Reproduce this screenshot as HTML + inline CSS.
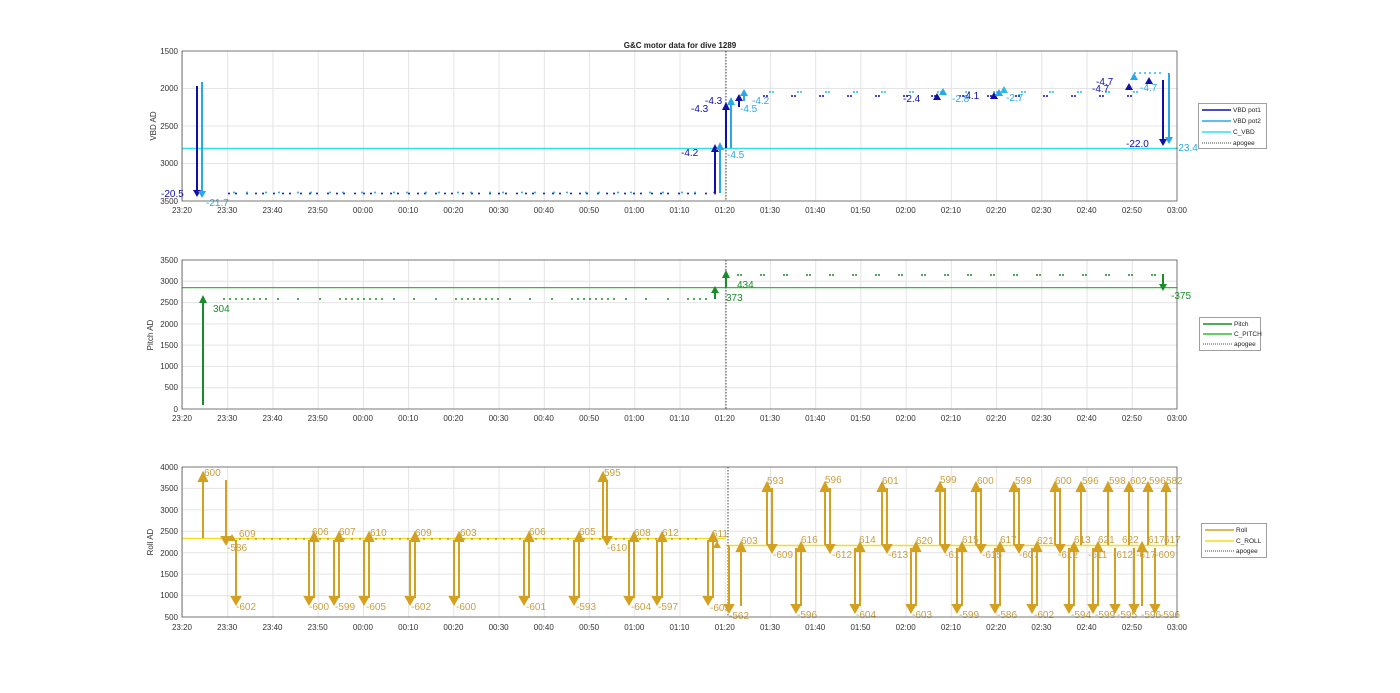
<!DOCTYPE html>
<html><head><meta charset="utf-8"><style>
html,body{margin:0;padding:0;background:#fff;}
svg{display:block;font-family:"Liberation Sans",sans-serif;}
.t{font-size:8px;fill:#333;}
.yl{font-size:8px;fill:#333;text-anchor:end;}
.xl{font-size:8px;fill:#333;text-anchor:middle;}
</style></head><body>
<svg width="1400" height="693" viewBox="0 0 1400 693" xmlns="http://www.w3.org/2000/svg">
<defs>
<pattern id="vg" patternUnits="userSpaceOnUse" x="182" y="0" width="45.227" height="10"><line x1="0.5" y1="0" x2="0.5" y2="10" stroke="#e4e4e4" stroke-width="1"/></pattern>
<marker id="ab" markerWidth="6" markerHeight="6" refX="3" refY="3" orient="auto"><path d="M0,0 L6,3 L0,6 Z" fill="#1010a8"/></marker>
</defs>
<rect width="1400" height="693" fill="#fff"/>
<text x="680" y="48" font-size="8" font-weight="bold" text-anchor="middle" fill="#222">G&amp;C motor data for dive 1289</text>

<!-- ===== AXIS 1 ===== -->
<rect x="182" y="51" width="995" height="150" fill="url(#vg)"/>
<g stroke="#e4e4e4"><line x1="182" y1="88.5" x2="1177" y2="88.5"/><line x1="182" y1="126" x2="1177" y2="126"/><line x1="182" y1="163.5" x2="1177" y2="163.5"/></g>
<line x1="182" y1="148.5" x2="1177" y2="148.5" stroke="#30e0e8" stroke-width="1.5"/>
<line x1="726" y1="51" x2="726" y2="201" stroke="#444" stroke-dasharray="1.5 1.5"/>
<!-- dots before -->
<line x1="229" y1="193.5" x2="720" y2="193.5" stroke="#1010a8" stroke-width="2" stroke-linecap="round" stroke-dasharray="0 7 0 11 0 9"/>
<line x1="234" y1="192.5" x2="720" y2="192.5" stroke="#28a8e8" stroke-width="2" stroke-linecap="round" stroke-dasharray="0 13 0 19"/>
<!-- dots after -->
<line x1="764" y1="96" x2="1150" y2="96" stroke="#1010a8" stroke-width="2" stroke-linecap="round" stroke-dasharray="0 3 0 25"/>
<line x1="770" y1="92" x2="1150" y2="92" stroke="#30b8e8" stroke-width="2" stroke-linecap="round" stroke-dasharray="0 3 0 25"/>
<line x1="1135" y1="73" x2="1165" y2="73" stroke="#30b8e8" stroke-width="2" stroke-linecap="round" stroke-dasharray="0 5"/>
<!-- arrows -->
<g stroke-width="2">
<line x1="197" y1="86" x2="197" y2="192" stroke="#1010a8"/><path d="M193,190 L201,190 L197,197 Z" fill="#1010a8"/>
<line x1="202" y1="82" x2="202" y2="192" stroke="#28a8e8"/><path d="M198,191 L206,191 L202,198 Z" fill="#28a8e8"/>
<line x1="715" y1="193" x2="715" y2="150" stroke="#1010a8"/><path d="M711,152 L719,152 L715,144 Z" fill="#1010a8"/>
<line x1="720" y1="193" x2="720" y2="148" stroke="#28a8e8"/><path d="M716,150 L724,150 L720,142 Z" fill="#28a8e8"/>
<line x1="726" y1="148" x2="726" y2="108" stroke="#1010a8"/><path d="M722,110 L730,110 L726,102 Z" fill="#1010a8"/>
<line x1="731" y1="148" x2="731" y2="103" stroke="#28a8e8"/><path d="M727,105 L735,105 L731,97 Z" fill="#28a8e8"/>
<line x1="739" y1="107" x2="739" y2="99" stroke="#1010a8"/><path d="M735,101 L743,101 L739,94 Z" fill="#1010a8"/>
<line x1="744" y1="101" x2="744" y2="95" stroke="#28a8e8"/><path d="M740,96 L748,96 L744,89 Z" fill="#28a8e8"/>
<path d="M933,100 L941,100 L937,93 Z" fill="#1010a8"/><path d="M939,95 L947,95 L943,88 Z" fill="#28a8e8"/>
<path d="M990,99 L998,99 L994,92 Z" fill="#1010a8"/><path d="M995,96 L1003,96 L999,89 Z" fill="#28a8e8"/><path d="M1000,93 L1008,93 L1004,86 Z" fill="#30b8e8"/>
<path d="M1125,90 L1133,90 L1129,83 Z" fill="#1010a8"/><path d="M1130,80 L1138,80 L1134,73 Z" fill="#28a8e8"/>
<path d="M1145,84 L1153,84 L1149,77 Z" fill="#1010a8"/>
<line x1="1163" y1="80" x2="1163" y2="140" stroke="#1010a8"/><path d="M1159,139 L1167,139 L1163,146 Z" fill="#1010a8"/>
<line x1="1169" y1="73" x2="1169" y2="138" stroke="#28a8e8"/><path d="M1165,137 L1173,137 L1169,144 Z" fill="#28a8e8"/>
</g>
<g font-size="10">
<text x="161" y="197" fill="#1010a8">-20.5</text><text x="206" y="206" fill="#28a8e8">-21.7</text>
<text x="681" y="156" fill="#1010a8">-4.2</text><text x="727" y="158" fill="#28a8e8">-4.5</text>
<text x="691" y="112" fill="#1010a8">-4.3</text><text x="705" y="104" fill="#1010a8">-4.3</text>
<text x="740" y="112" fill="#28a8e8">-4.5</text><text x="752" y="104" fill="#28a8e8">-4.2</text>
<text x="903" y="102" fill="#1010a8">-2.4</text><text x="952" y="102" fill="#28a8e8">-2.8</text><text x="962" y="99" fill="#1010a8">-4.1</text>
<text x="1006" y="101" fill="#28a8e8">-2.7</text><text x="1096" y="85" fill="#1010a8">-4.7</text><text x="1092" y="92" fill="#1010a8">-4.7</text><text x="1140" y="91" fill="#28a8e8">-4.7</text>
<text x="1126" y="147" fill="#1010a8">-22.0</text><text x="1175" y="151" fill="#28a8e8">-23.4</text>
</g>
<rect x="182" y="51" width="995" height="150" fill="none" stroke="#555" stroke-width="0.8"/>
<g class="yl"><text x="178" y="54">1500</text><text x="178" y="91">2000</text><text x="178" y="129">2500</text><text x="178" y="166">3000</text><text x="178" y="204">3500</text></g>
<text transform="translate(156,126) rotate(-90)" font-size="8" text-anchor="middle" fill="#333">VBD AD</text>
<g id="xt1" class="xl" transform="translate(0,213)">
<text x="182">23:20</text><text x="227.2">23:30</text><text x="272.5">23:40</text><text x="317.7">23:50</text><text x="362.9">00:00</text><text x="408.2">00:10</text><text x="453.4">00:20</text><text x="498.6">00:30</text><text x="543.8">00:40</text><text x="589.1">00:50</text><text x="634.3">01:00</text><text x="679.5">01:10</text><text x="724.8">01:20</text><text x="770">01:30</text><text x="815.2">01:40</text><text x="860.5">01:50</text><text x="905.7">02:00</text><text x="950.9">02:10</text><text x="996.2">02:20</text><text x="1041.4">02:30</text><text x="1086.6">02:40</text><text x="1131.9">02:50</text><text x="1177">03:00</text>
</g>
<rect x="1198.5" y="103.5" width="68" height="45" fill="#fff" stroke="#777" stroke-width="0.7"/>
<g font-size="6.5" fill="#222">
<line x1="1202" y1="110" x2="1231" y2="110" stroke="#1010a8" stroke-width="1.5"/><text x="1233" y="112">VBD pot1</text>
<line x1="1202" y1="121" x2="1231" y2="121" stroke="#28a8e8" stroke-width="1.5"/><text x="1233" y="123">VBD pot2</text>
<line x1="1202" y1="132" x2="1231" y2="132" stroke="#30e0e8" stroke-width="1.5"/><text x="1233" y="134">C_VBD</text>
<line x1="1202" y1="143" x2="1231" y2="143" stroke="#444" stroke-dasharray="1 1"/><text x="1233" y="145">apogee</text>
</g>

<!-- ===== AXIS 2 ===== -->
<rect x="182" y="260" width="995" height="149" fill="url(#vg)"/>
<g stroke="#e4e4e4"><line x1="182" y1="281.3" x2="1177" y2="281.3"/><line x1="182" y1="302.6" x2="1177" y2="302.6"/><line x1="182" y1="323.9" x2="1177" y2="323.9"/><line x1="182" y1="345.1" x2="1177" y2="345.1"/><line x1="182" y1="366.4" x2="1177" y2="366.4"/><line x1="182" y1="387.7" x2="1177" y2="387.7"/></g>
<line x1="182" y1="287.6" x2="1177" y2="287.6" stroke="#30c030" stroke-width="1.2"/>
<line x1="726" y1="260" x2="726" y2="409" stroke="#444" stroke-dasharray="1.5 1.5"/>
<line x1="224" y1="299" x2="712" y2="299" stroke="#1a8c2a" stroke-width="2" stroke-linecap="round" stroke-dasharray="0 6 0 6 0 6 0 6 0 6 0 6 0 6 0 12 0 20 0 22 0 20"/>
<line x1="738" y1="275" x2="1160" y2="275" stroke="#1a8c2a" stroke-width="2" stroke-linecap="round" stroke-dasharray="0 3 0 20"/>
<g stroke-width="2">
<line x1="203" y1="405" x2="203" y2="302" stroke="#1a8c2a"/><path d="M199,303 L207,303 L203,295 Z" fill="#1a8c2a"/>
<line x1="715" y1="299" x2="715" y2="292" stroke="#1a8c2a"/><path d="M711,293 L719,293 L715,286 Z" fill="#1a8c2a"/>
<line x1="726" y1="287" x2="726" y2="277" stroke="#1a8c2a"/><path d="M722,278 L730,278 L726,270 Z" fill="#1a8c2a"/>
<line x1="1163" y1="274" x2="1163" y2="285" stroke="#1a8c2a"/><path d="M1159,284 L1167,284 L1163,291 Z" fill="#1a8c2a"/>
</g>
<g font-size="10" fill="#1a8c2a"><text x="213" y="312">304</text><text x="726" y="301">373</text><text x="737" y="288">434</text><text x="1171" y="299">-375</text></g>
<rect x="182" y="260" width="995" height="149" fill="none" stroke="#555" stroke-width="0.8"/>
<g class="yl"><text x="178" y="263">3500</text><text x="178" y="284">3000</text><text x="178" y="305">2500</text><text x="178" y="327">2000</text><text x="178" y="348">1500</text><text x="178" y="369">1000</text><text x="178" y="390">500</text><text x="178" y="412">0</text></g>
<text transform="translate(153,335) rotate(-90)" font-size="8" text-anchor="middle" fill="#333">Pitch AD</text>
<g class="xl" transform="translate(0,421)">
<text x="182">23:20</text><text x="227.2">23:30</text><text x="272.5">23:40</text><text x="317.7">23:50</text><text x="362.9">00:00</text><text x="408.2">00:10</text><text x="453.4">00:20</text><text x="498.6">00:30</text><text x="543.8">00:40</text><text x="589.1">00:50</text><text x="634.3">01:00</text><text x="679.5">01:10</text><text x="724.8">01:20</text><text x="770">01:30</text><text x="815.2">01:40</text><text x="860.5">01:50</text><text x="905.7">02:00</text><text x="950.9">02:10</text><text x="996.2">02:20</text><text x="1041.4">02:30</text><text x="1086.6">02:40</text><text x="1131.9">02:50</text><text x="1177">03:00</text>
</g>
<rect x="1199.5" y="317.5" width="61" height="33" fill="#fff" stroke="#777" stroke-width="0.7"/>
<g font-size="6.5" fill="#222">
<line x1="1203" y1="324" x2="1232" y2="324" stroke="#1a8c2a" stroke-width="1.5"/><text x="1234" y="326">Pitch</text>
<line x1="1203" y1="334" x2="1232" y2="334" stroke="#30c030" stroke-width="1.5"/><text x="1234" y="336">C_PITCH</text>
<line x1="1203" y1="344" x2="1232" y2="344" stroke="#444" stroke-dasharray="1 1"/><text x="1234" y="346">apogee</text>
</g>

<!-- ===== AXIS 3 ===== -->
<rect x="182" y="467" width="995" height="150" fill="url(#vg)"/>
<g stroke="#e4e4e4"><line x1="182" y1="488.4" x2="1177" y2="488.4"/><line x1="182" y1="509.9" x2="1177" y2="509.9"/><line x1="182" y1="531.3" x2="1177" y2="531.3"/><line x1="182" y1="552.7" x2="1177" y2="552.7"/><line x1="182" y1="574.1" x2="1177" y2="574.1"/><line x1="182" y1="595.6" x2="1177" y2="595.6"/></g>
<line x1="182" y1="538.5" x2="726" y2="538.5" stroke="#f0e020" stroke-width="1.5"/>
<line x1="726" y1="545.5" x2="1177" y2="545.5" stroke="#f0e020" stroke-width="1.5"/>
<line x1="728" y1="467" x2="728" y2="617" stroke="#444" stroke-dasharray="1.5 1.5"/>
<line x1="240" y1="539" x2="700" y2="539" stroke="#c89820" stroke-width="2" stroke-linecap="round" stroke-dasharray="0 8"/>
<g stroke="#d4a020" stroke-width="2" fill="#d4a020">
<line x1="203" y1="538" x2="203" y2="480"/><path d="M199,481 L207,481 L203,473 Z"/>
<line x1="226" y1="480" x2="226" y2="538"/><path d="M222,537 L230,537 L226,544 Z"/>
<line x1="236" y1="540" x2="236" y2="598"/><path d="M232,597 L240,597 L236,604 Z"/>
<path d="M228,541 L236,541 L232,534 Z" stroke="none"/>
<!-- down pairs before apogee -->
<line x1="309" y1="540" x2="309" y2="598"/><path d="M305,597 L313,597 L309,604 Z"/><line x1="314" y1="598" x2="314" y2="540"/><path d="M310,541 L318,541 L314,533 Z"/>
<line x1="334" y1="540" x2="334" y2="598"/><path d="M330,597 L338,597 L334,604 Z"/><line x1="339" y1="598" x2="339" y2="540"/><path d="M335,541 L343,541 L339,533 Z"/>
<line x1="364" y1="540" x2="364" y2="598"/><path d="M360,597 L368,597 L364,604 Z"/><line x1="369" y1="598" x2="369" y2="540"/><path d="M365,541 L373,541 L369,533 Z"/>
<line x1="410" y1="540" x2="410" y2="598"/><path d="M406,597 L414,597 L410,604 Z"/><line x1="415" y1="598" x2="415" y2="540"/><path d="M411,541 L419,541 L415,533 Z"/>
<line x1="454" y1="540" x2="454" y2="598"/><path d="M450,597 L458,597 L454,604 Z"/><line x1="459" y1="598" x2="459" y2="540"/><path d="M455,541 L463,541 L459,533 Z"/>
<line x1="524" y1="540" x2="524" y2="598"/><path d="M520,597 L528,597 L524,604 Z"/><line x1="529" y1="598" x2="529" y2="540"/><path d="M525,541 L533,541 L529,533 Z"/>
<line x1="574" y1="540" x2="574" y2="598"/><path d="M570,597 L578,597 L574,604 Z"/><line x1="579" y1="598" x2="579" y2="540"/><path d="M575,541 L583,541 L579,533 Z"/>
<line x1="603" y1="538" x2="603" y2="480"/><path d="M599,481 L607,481 L603,473 Z"/><line x1="607" y1="480" x2="607" y2="538"/><path d="M603,537 L611,537 L607,544 Z"/>
<line x1="629" y1="540" x2="629" y2="598"/><path d="M625,597 L633,597 L629,604 Z"/><line x1="634" y1="598" x2="634" y2="540"/><path d="M630,541 L638,541 L634,533 Z"/>
<line x1="657" y1="540" x2="657" y2="598"/><path d="M653,597 L661,597 L657,604 Z"/><line x1="662" y1="598" x2="662" y2="540"/><path d="M658,541 L666,541 L662,533 Z"/>
<line x1="708" y1="540" x2="708" y2="598"/><path d="M704,597 L712,597 L708,604 Z"/><line x1="713" y1="598" x2="713" y2="540"/><path d="M709,541 L717,541 L713,533 Z"/>
<path d="M713,548 L721,548 L717,541 Z" stroke="none"/>
<line x1="729" y1="546" x2="729" y2="606"/><path d="M725,605 L733,605 L729,612 Z"/>
<line x1="741" y1="606" x2="741" y2="550"/><path d="M737,551 L745,551 L741,543 Z"/>
<!-- after apogee: up pairs and down pairs -->
<line x1="767" y1="545" x2="767" y2="490"/><path d="M763,491 L771,491 L767,483 Z"/><line x1="772" y1="488" x2="772" y2="546"/><path d="M768,545 L776,545 L772,552 Z"/>
<line x1="796" y1="548" x2="796" y2="606"/><path d="M792,605 L800,605 L796,612 Z"/><line x1="801" y1="606" x2="801" y2="550"/><path d="M797,551 L805,551 L801,543 Z"/>
<line x1="825" y1="545" x2="825" y2="490"/><path d="M821,491 L829,491 L825,483 Z"/><line x1="830" y1="488" x2="830" y2="546"/><path d="M826,545 L834,545 L830,552 Z"/>
<line x1="855" y1="548" x2="855" y2="606"/><path d="M851,605 L859,605 L855,612 Z"/><line x1="860" y1="606" x2="860" y2="550"/><path d="M856,551 L864,551 L860,543 Z"/>
<line x1="882" y1="545" x2="882" y2="490"/><path d="M878,491 L886,491 L882,483 Z"/><line x1="887" y1="488" x2="887" y2="546"/><path d="M883,545 L891,545 L887,552 Z"/>
<line x1="911" y1="548" x2="911" y2="606"/><path d="M907,605 L915,605 L911,612 Z"/><line x1="916" y1="606" x2="916" y2="550"/><path d="M912,551 L920,551 L916,543 Z"/>
<line x1="940" y1="545" x2="940" y2="490"/><path d="M936,491 L944,491 L940,483 Z"/><line x1="945" y1="488" x2="945" y2="546"/><path d="M941,545 L949,545 L945,552 Z"/>
<line x1="957" y1="548" x2="957" y2="606"/><path d="M953,605 L961,605 L957,612 Z"/><line x1="962" y1="606" x2="962" y2="550"/><path d="M958,551 L966,551 L962,543 Z"/>
<line x1="976" y1="545" x2="976" y2="490"/><path d="M972,491 L980,491 L976,483 Z"/><line x1="981" y1="488" x2="981" y2="546"/><path d="M977,545 L985,545 L981,552 Z"/>
<line x1="995" y1="548" x2="995" y2="606"/><path d="M991,605 L999,605 L995,612 Z"/><line x1="1000" y1="606" x2="1000" y2="550"/><path d="M996,551 L1004,551 L1000,543 Z"/>
<line x1="1014" y1="545" x2="1014" y2="490"/><path d="M1010,491 L1018,491 L1014,483 Z"/><line x1="1019" y1="488" x2="1019" y2="546"/><path d="M1015,545 L1023,545 L1019,552 Z"/>
<line x1="1032" y1="548" x2="1032" y2="606"/><path d="M1028,605 L1036,605 L1032,612 Z"/><line x1="1037" y1="606" x2="1037" y2="550"/><path d="M1033,551 L1041,551 L1037,543 Z"/>
<line x1="1055" y1="545" x2="1055" y2="490"/><path d="M1051,491 L1059,491 L1055,483 Z"/><line x1="1060" y1="488" x2="1060" y2="546"/><path d="M1056,545 L1064,545 L1060,552 Z"/>
<line x1="1069" y1="548" x2="1069" y2="606"/><path d="M1065,605 L1073,605 L1069,612 Z"/><line x1="1074" y1="606" x2="1074" y2="550"/><path d="M1070,551 L1078,551 L1074,543 Z"/>
<line x1="1081" y1="545" x2="1081" y2="490"/><path d="M1077,491 L1085,491 L1081,483 Z"/>
<line x1="1093" y1="548" x2="1093" y2="606"/><path d="M1089,605 L1097,605 L1093,612 Z"/><line x1="1098" y1="606" x2="1098" y2="550"/><path d="M1094,551 L1102,551 L1098,543 Z"/>
<line x1="1108" y1="545" x2="1108" y2="490"/><path d="M1104,491 L1112,491 L1108,483 Z"/>
<line x1="1115" y1="548" x2="1115" y2="606"/><path d="M1111,605 L1119,605 L1115,612 Z"/>
<line x1="1129" y1="545" x2="1129" y2="490"/><path d="M1125,491 L1133,491 L1129,483 Z"/>
<line x1="1134" y1="548" x2="1134" y2="606"/><path d="M1130,605 L1138,605 L1134,612 Z"/>
<line x1="1142" y1="606" x2="1142" y2="550"/><path d="M1138,551 L1146,551 L1142,543 Z"/>
<line x1="1148" y1="545" x2="1148" y2="490"/><path d="M1144,491 L1152,491 L1148,483 Z"/>
<line x1="1155" y1="548" x2="1155" y2="606"/><path d="M1151,605 L1159,605 L1155,612 Z"/>
<line x1="1166" y1="545" x2="1166" y2="490"/><path d="M1162,491 L1170,491 L1166,483 Z"/>
</g>
<g font-size="10" fill="#c8a040">
<text x="204" y="476">600</text><text x="227" y="551">-586</text><text x="239" y="537">609</text><text x="236" y="610">-602</text>
<text x="312" y="535">606</text><text x="309" y="610">-600</text><text x="339" y="535">607</text><text x="335" y="610">-599</text>
<text x="370" y="536">610</text><text x="366" y="610">-605</text><text x="415" y="536">609</text><text x="411" y="610">-602</text>
<text x="460" y="536">603</text><text x="456" y="610">-600</text><text x="529" y="535">606</text><text x="526" y="610">-601</text>
<text x="579" y="535">605</text><text x="576" y="610">-593</text><text x="604" y="476">595</text><text x="607" y="551">-610</text>
<text x="634" y="536">608</text><text x="631" y="610">-604</text><text x="662" y="536">612</text><text x="658" y="610">-597</text>
<text x="712" y="537">611</text><text x="710" y="611">-603</text><text x="729" y="619">-562</text><text x="741" y="544">603</text>
<text x="767" y="484">593</text><text x="773" y="558">-609</text><text x="801" y="543">616</text><text x="797" y="618">-596</text>
<text x="825" y="483">596</text><text x="832" y="558">-612</text><text x="859" y="543">614</text><text x="856" y="618">-604</text>
<text x="882" y="484">601</text><text x="888" y="558">-613</text><text x="916" y="544">620</text><text x="912" y="618">-603</text>
<text x="940" y="483">599</text><text x="945" y="558">-61</text><text x="962" y="543">615</text><text x="959" y="618">-599</text>
<text x="977" y="484">600</text><text x="982" y="558">-615</text><text x="1000" y="543">617</text><text x="997" y="618">-586</text>
<text x="1015" y="484">599</text><text x="1019" y="558">-607</text><text x="1037" y="544">621</text><text x="1034" y="618">-602</text>
<text x="1055" y="484">600</text><text x="1058" y="558">-612</text><text x="1074" y="543">613</text><text x="1071" y="618">-594</text>
<text x="1082" y="484">596</text><text x="1088" y="558">-611</text><text x="1098" y="543">621</text><text x="1095" y="618">-599</text>
<text x="1109" y="484">598</text><text x="1113" y="558">-612</text><text x="1122" y="543">622</text><text x="1117" y="618">-595</text>
<text x="1130" y="484">602</text><text x="1136" y="558">-617</text><text x="1149" y="484">596</text><text x="1155" y="558">-609</text>
<text x="1148" y="543">617</text><text x="1141" y="618">-596</text><text x="1160" y="618">-596</text><text x="1166" y="484">582</text><text x="1164" y="543">617</text>
</g>
<rect x="182" y="467" width="995" height="150" fill="none" stroke="#555" stroke-width="0.8"/>
<g class="yl"><text x="178" y="470">4000</text><text x="178" y="491">3500</text><text x="178" y="513">3000</text><text x="178" y="534">2500</text><text x="178" y="556">2000</text><text x="178" y="577">1500</text><text x="178" y="598">1000</text><text x="178" y="620">500</text></g>
<text transform="translate(153,542) rotate(-90)" font-size="8" text-anchor="middle" fill="#333">Roll AD</text>
<g class="xl" transform="translate(0,630)">
<text x="182">23:20</text><text x="227.2">23:30</text><text x="272.5">23:40</text><text x="317.7">23:50</text><text x="362.9">00:00</text><text x="408.2">00:10</text><text x="453.4">00:20</text><text x="498.6">00:30</text><text x="543.8">00:40</text><text x="589.1">00:50</text><text x="634.3">01:00</text><text x="679.5">01:10</text><text x="724.8">01:20</text><text x="770">01:30</text><text x="815.2">01:40</text><text x="860.5">01:50</text><text x="905.7">02:00</text><text x="950.9">02:10</text><text x="996.2">02:20</text><text x="1041.4">02:30</text><text x="1086.6">02:40</text><text x="1131.9">02:50</text><text x="1177">03:00</text>
</g>
<rect x="1201.5" y="523.5" width="65" height="34" fill="#fff" stroke="#777" stroke-width="0.7"/>
<g font-size="6.5" fill="#222">
<line x1="1205" y1="530" x2="1234" y2="530" stroke="#d4a020" stroke-width="1.5"/><text x="1236" y="532">Roll</text>
<line x1="1205" y1="541" x2="1234" y2="541" stroke="#f0e020" stroke-width="1.5"/><text x="1236" y="543">C_ROLL</text>
<line x1="1205" y1="551" x2="1234" y2="551" stroke="#444" stroke-dasharray="1 1"/><text x="1236" y="553">apogee</text>
</g>
</svg>
</body></html>
